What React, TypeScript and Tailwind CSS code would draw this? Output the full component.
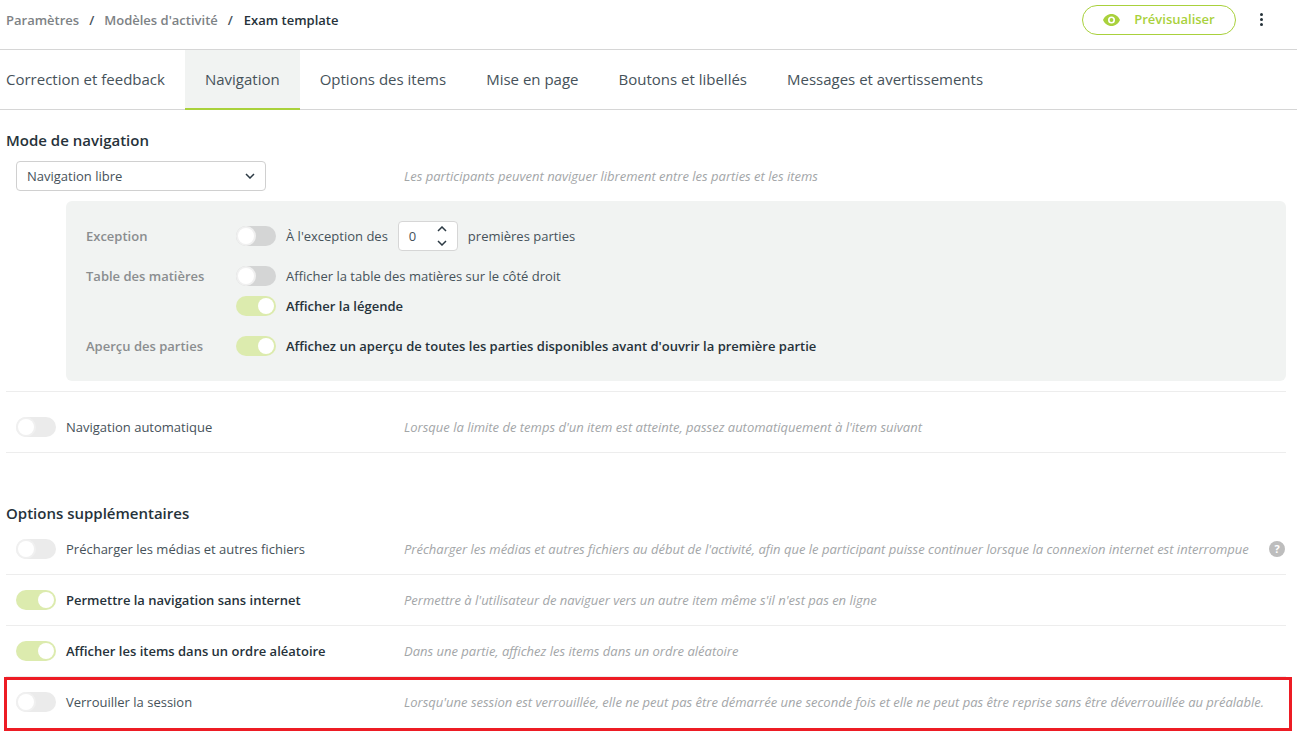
import React from "react";

const Toggle = ({ on = false, dim = false }: { on?: boolean; dim?: boolean }) => (
    <span
        className={`flex h-5 w-10 shrink-0 items-center rounded-full p-[2px] ${on ? "justify-end bg-[#dcebae]" : dim ? "bg-[#ebebeb]" : "bg-[#d4d5d5]"}`}
    >
        <span className={`h-4 w-4 rounded-full bg-white ${on ? "" : "shadow-[0_0_0_2px_#f0f0f0]"}`} />
    </span>
);

const Chevron = ({ up = false, className = "" }: { up?: boolean; className?: string }) => (
    <svg width="10" height="6" viewBox="0 0 10 6" className={className}>
        <path d={up ? "M1 5l4-4 4 4" : "M1 1l4 4 4-4"} fill="none" stroke="#2c3a44" strokeWidth="1.5" />
    </svg>
);

const OptionRow = ({ label, hint, on = false, help = false, last = false }: { label: string; hint: string; on?: boolean; help?: boolean; last?: boolean }) => (
    <div className={`flex h-[51px] items-center border-b pl-[10px] ${last ? "border-transparent" : "border-[#ededed]"}`}>
        <Toggle on={on} dim />
        <span className={`ml-[10px] mt-[2px] w-[338px] shrink-0 ${on ? "font-semibold text-[#26323a]" : "text-[#46525a]"}`}>{label}</span>
        <span className="mt-[2px] flex-1 italic text-[#a3a6a8]">{hint}</span>
        {help && (
            <span className="mr-[1px] flex h-4 w-4 items-center justify-center rounded-full bg-[#bdbdbd] text-[11px] font-bold text-white">?</span>
        )}
    </div>
);

const tabs = ["Correction et feedback", "Navigation", "Options des items", "Mise en page", "Boutons et libellés", "Messages et avertissements"];

export default function App() {
    return (
        <div className="relative h-[738px] w-[1297px] overflow-hidden bg-white font-['Open_Sans',sans-serif] text-[13px] text-[#46525a]">
            <header className="flex h-[50px] items-center border-b border-[#d6d6d6] pb-[9px] pl-[6px] pr-[33px]">
                <nav className="mt-[2px] flex flex-1 items-center font-semibold">
                    <span className="text-[#7d8285]">Paramètres</span>
                    <span className="mx-[10px] text-[#46525a]">/</span>
                    <span className="text-[#7d8285]">Modèles d'activité</span>
                    <span className="ml-[10px] mr-[11px] text-[#46525a]">/</span>
                    <span className="text-[#26323a]">Exam template</span>
                </nav>
                <button className="flex h-[30px] w-[154px] items-center justify-center gap-[14px] rounded-full border border-[#a9d13c] font-semibold text-[#a9d13c]">
                    <svg width="17" height="12" viewBox="0 0 17 12">
                        <path fillRule="evenodd" fill="#a9d13c" d="M8.5 0C4.6 0 1.6 2.4 0 6c1.6 3.6 4.6 6 8.5 6s6.9-2.4 8.5-6C15.4 2.4 12.400 0 8.500 0zm0 9.500a3.500 3.500 0 1 1 0-7 3.500 3.500 0 0 1 0 7zm0-1.600a1.900 1.900 0 1 0 0-3.800 1.900 1.900 0 0 0 0 3.800z" />
                    </svg>
                    Prévisualiser
                </button>
                <span className="mb-[2px] ml-[24px] flex w-[4px] flex-col gap-[2px]">
                    <span className="h-[3px] w-[3px] rounded-full bg-[#26323a]" />
                    <span className="h-[3px] w-[3px] rounded-full bg-[#26323a]" />
                    <span className="h-[3px] w-[3px] rounded-full bg-[#26323a]" />
                </span>
            </header>

            <div className="flex h-[60px] border-b border-[#d6d6d6] pl-[6px] text-[15px]">
                {tabs.map((tab) => (
                    <div
                        key={tab}
                        className={`flex h-[60px] items-center border-b-2 ${tab === "Navigation" ? "border-[#a9d13c] bg-[#f1f3f2] px-[20px]" : tab === "Correction et feedback" ? "border-transparent pr-[20px]" : "border-transparent px-[20px]"}`}
                    >
                        {tab}
                    </div>
                ))}
            </div>

            <main className="pl-[6px] pr-[11px]">
                <h2 className="mt-[20px] text-[15px] leading-[20px] font-semibold text-[#26323a]">Mode de navigation</h2>
                <div className="mt-[11px] flex items-center pl-[10px]">
                    <div className="flex h-[30px] w-[250px] shrink-0 items-center justify-between rounded border border-[#d0d0d0] pl-[10px] pr-[10px]">
                        <span className="mt-[1px]">Navigation libre</span>
                        <Chevron />
                    </div>
                    <span className="ml-[138px] mt-[1px] italic text-[#a3a6a8]">Les participants peuvent naviguer librement entre les parties et les items</span>
                </div>

                <div className="ml-[60px] mt-[10px] h-[180px] rounded-md bg-[#f1f3f2] pb-[20px] pl-[20px] pt-[20px]">
                    <div className="flex h-[30px] items-center">
                        <span className="mt-[2px] w-[150px] font-semibold text-[#8a8d8f]">Exception</span>
                        <Toggle />
                        <span className="ml-[10px] mt-[2px]">À l'exception des</span>
                        <div className="ml-[10px] flex h-[30px] w-[60px] items-center justify-between rounded border border-[#d6d6d6] bg-white pl-[10px] pr-[10px]">
                            <span className="mt-[2px]">0</span>
                            <span className="flex flex-col gap-[8px]">
                                <Chevron up />
                                <Chevron />
                            </span>
                        </div>
                        <span className="ml-[10px] mt-[2px]">premières parties</span>
                    </div>
                    <div className="mt-[10px] flex h-[30px] items-center">
                        <span className="mt-[2px] w-[150px] font-semibold text-[#8a8d8f]">Table des matières</span>
                        <Toggle />
                        <span className="ml-[10px] mt-[2px]">Afficher la table des matières sur le côté droit</span>
                    </div>
                    <div className="flex h-[30px] items-center pl-[150px]">
                        <Toggle on />
                        <span className="ml-[10px] mt-[2px] font-semibold text-[#26323a]">Afficher la légende</span>
                    </div>
                    <div className="mt-[10px] flex h-[30px] items-center">
                        <span className="mt-[2px] w-[150px] font-semibold text-[#8a8d8f]">Aperçu des parties</span>
                        <Toggle on />
                        <span className="ml-[10px] mt-[2px] font-semibold text-[#26323a]">Affichez un aperçu de toutes les parties disponibles avant d'ouvrir la première partie</span>
                    </div>
                </div>

                <div className="mt-[10px] border-t border-[#ededed]">
                    <div className="flex h-[61px] items-center border-b border-[#ededed] pl-[10px] pt-[10px]">
                        <Toggle dim />
                        <span className="ml-[10px] mt-[2px] w-[338px] shrink-0">Navigation automatique</span>
                        <span className="mt-[2px] italic text-[#a3a6a8]">Lorsque la limite de temps d'un item est atteinte, passez automatiquement à l'item suivant</span>
                    </div>
                </div>

                <h2 className="mt-[50px] mb-[1px] text-[15px] leading-[20px] font-semibold text-[#26323a]">Options supplémentaires</h2>
                <div>
                    <OptionRow help label="Précharger les médias et autres fichiers" hint="Précharger les médias et autres fichiers au début de l'activité, afin que le participant puisse continuer lorsque la connexion internet est interrompue" />
                    <OptionRow on label="Permettre la navigation sans internet" hint="Permettre à l'utilisateur de naviguer vers un autre item même s'il n'est pas en ligne" />
                    <OptionRow on label="Afficher les items dans un ordre aléatoire" hint="Dans une partie, affichez les items dans un ordre aléatoire" />
                    <OptionRow last label="Verrouiller la session" hint="Lorsqu'une session est verrouillée, elle ne peut pas être démarrée une seconde fois et elle ne peut pas être reprise sans être déverrouillée au préalable." />
                </div>
            </main>

            {/* annotation frame round the last row */}
            <div className="absolute left-[4px] top-[677px] h-[54px] w-[1288px] border-[3px] border-[#ed1c24]" />
        </div>
    );
}
